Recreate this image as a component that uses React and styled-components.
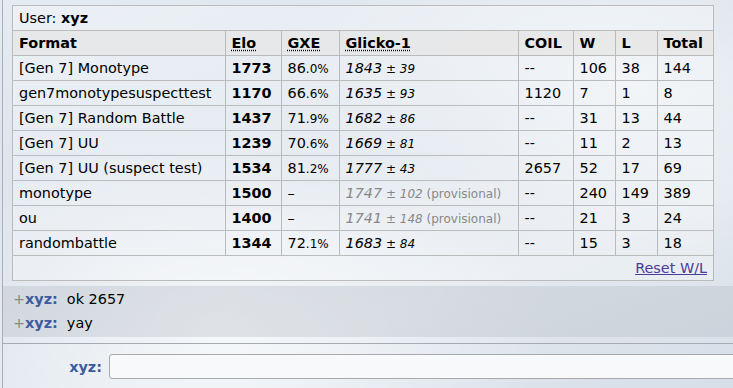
import React from 'react';
import styled, { createGlobalStyle } from 'styled-components';

const ratings = [
  { format: '[Gen 7] Monotype', elo: 1773, gxe: ['86', '.0%'], glicko: 1843, rd: 39, coil: '--', w: 106, l: 38 },
  { format: 'gen7monotypesuspecttest', elo: 1170, gxe: ['66', '.6%'], glicko: 1635, rd: 93, coil: '1120', w: 7, l: 1 },
  { format: '[Gen 7] Random Battle', elo: 1437, gxe: ['71', '.9%'], glicko: 1682, rd: 86, coil: '--', w: 31, l: 13 },
  { format: '[Gen 7] UU', elo: 1239, gxe: ['70', '.6%'], glicko: 1669, rd: 81, coil: '--', w: 11, l: 2 },
  { format: '[Gen 7] UU (suspect test)', elo: 1534, gxe: ['81', '.2%'], glicko: 1777, rd: 43, coil: '2657', w: 52, l: 17 },
  { format: 'monotype', elo: 1500, gxe: null, glicko: 1747, rd: 102, coil: '--', w: 240, l: 149, provisional: true },
  { format: 'ou', elo: 1400, gxe: null, glicko: 1741, rd: 148, coil: '--', w: 21, l: 3, provisional: true },
  { format: 'randombattle', elo: 1344, gxe: ['72', '.1%'], glicko: 1683, rd: 84, coil: '--', w: 15, l: 3 },
];

const messages = ['ok 2657', 'yay'];

const GlobalStyle = createGlobalStyle`
  html, body {
    margin: 0;
    height: 100%;
  }
  body {
    font-family: "DejaVu Sans", Verdana, sans-serif;
    font-size: 14.4px;
    color: #000;
    background:
      radial-gradient(ellipse at 30% 85%, rgba(255, 255, 255, 0.7), transparent 45%),
      radial-gradient(ellipse at 85% 20%, rgba(255, 255, 255, 0.5), transparent 40%),
      linear-gradient(160deg, #e4ebf2 0%, #d9e1ea 45%, #e3e9ef 70%, #d6dee8 100%);
  }
`;

const Room = styled.div`
  display: flex;
  flex-direction: column;
  height: 388px;
  margin-left: 2px;
  border-left: 1px solid #aab0b8;
`;

const ChatLog = styled.div`
  height: 343px;
  border-bottom: 1px solid #a8acb1;
`;

const StatsBox = styled.div`
  width: 702px;
  margin: 5px 0 0 9px;
  border: 1px solid #bbbbbb;
  box-sizing: border-box;
  background: rgba(255, 255, 255, 0.3);
`;

const Title = styled.div`
  height: 25px;
  line-height: 25px;
  padding: 0 6px;
  border-bottom: 1px solid #bbbbbb;
  box-sizing: border-box;
`;

const Table = styled.table`
  width: 100%;
  table-layout: fixed;
  border-collapse: collapse;

  th, td {
    height: 24px;
    padding: 0 6px;
    line-height: 16px;
    text-align: left;
    white-space: nowrap;
    border: 1px solid #bbbbbb;
  }
  tr > :first-child {
    border-left: 0;
  }
  tr > :last-child {
    border-right: 0;
  }
  thead th {
    border-top: 0;
    font-weight: bold;
    background: rgba(230, 230, 230, 0.85);
  }
`;

const Hint = styled.abbr`
  text-decoration: underline dotted;
  text-underline-offset: 2px;
`;

const Elo = styled.td`
  font-weight: bold;
`;

const Small = styled.small`
  font-size: 12px;
`;

const Glicko = styled.em`
  color: ${(p) => (p.$provisional ? '#888888' : 'inherit')};
`;

const Provisional = styled.small`
  font-size: 12px;
  color: #888888;
`;

const Footer = styled.div`
  height: 24px;
  line-height: 24px;
  padding: 0 6px;
  text-align: right;
`;

const ResetLink = styled.a`
  color: #4b3b9a;
  text-decoration: underline;
  cursor: pointer;
`;

const Messages = styled.div`
  margin-top: 5px;
  padding: 1px 0 2px 10px;
  background: rgba(180, 186, 194, 0.35);
`;

const Line = styled.div`
  height: 24px;
  line-height: 24px;
`;

const Rank = styled.span`
  color: #8a8a8a;
`;

const Name = styled.strong`
  color: #3d5c9e;
  margin-right: 9px;
`;

const Compose = styled.div`
  display: flex;
  align-items: center;
  gap: 7px;
  padding-top: 10px;
`;

const Label = styled.label`
  width: 99px;
  text-align: right;
  font-weight: bold;
  color: #3d5c9e;
`;

const Input = styled.input`
  flex: 1;
  height: 25px;
  margin-right: -20px;
  box-sizing: border-box;
  border: 1px solid #a9a9a9;
  border-radius: 3px;
  background: #f7f9fb;
  font: inherit;
`;

const App = () => {
  return (
    <>
      <GlobalStyle />
      <Room>
        <ChatLog>
          <StatsBox>
            <Title>
              User: <strong>xyz</strong>
            </Title>
            <Table>
              <colgroup>
                <col style={{ width: 212 }} />
                <col style={{ width: 56 }} />
                <col style={{ width: 58 }} />
                <col style={{ width: 179 }} />
                <col style={{ width: 55 }} />
                <col style={{ width: 42 }} />
                <col style={{ width: 42 }} />
                <col />
              </colgroup>
              <thead>
                <tr>
                  <th>Format</th>
                  <th><Hint title="Elo rating">Elo</Hint></th>
                  <th><Hint title="user's percentage chance of winning a random battle">GXE</Hint></th>
                  <th><Hint title="Glicko-1 rating">Glicko-1</Hint></th>
                  <th>COIL</th>
                  <th>W</th>
                  <th>L</th>
                  <th>Total</th>
                </tr>
              </thead>
              <tbody>
                {ratings.map((r) => (
                  <tr key={r.format}>
                    <td>{r.format}</td>
                    <Elo>{r.elo}</Elo>
                    <td>
                      {r.gxe ? (
                        <>
                          {r.gxe[0]}
                          <Small>{r.gxe[1]}</Small>
                        </>
                      ) : (
                        '–'
                      )}
                    </td>
                    <td>
                      <Glicko $provisional={r.provisional}>
                        {r.glicko}
                        <Small> ± {r.rd}</Small>
                      </Glicko>
                      {r.provisional && <Provisional> (provisional)</Provisional>}
                    </td>
                    <td>{r.coil}</td>
                    <td>{r.w}</td>
                    <td>{r.l}</td>
                    <td>{r.w + r.l}</td>
                  </tr>
                ))}
              </tbody>
            </Table>
            <Footer>
              <ResetLink>Reset W/L</ResetLink>
            </Footer>
          </StatsBox>
          <Messages>
            {messages.map((m, i) => (
              <Line key={i}>
                <Rank>+</Rank>
                <Name>xyz:</Name>
                {m}
              </Line>
            ))}
          </Messages>
        </ChatLog>
        <Compose>
          <Label htmlFor="chat">xyz:</Label>
          <Input id="chat" type="text" />
        </Compose>
      </Room>
    </>
  );
};

export default App;
